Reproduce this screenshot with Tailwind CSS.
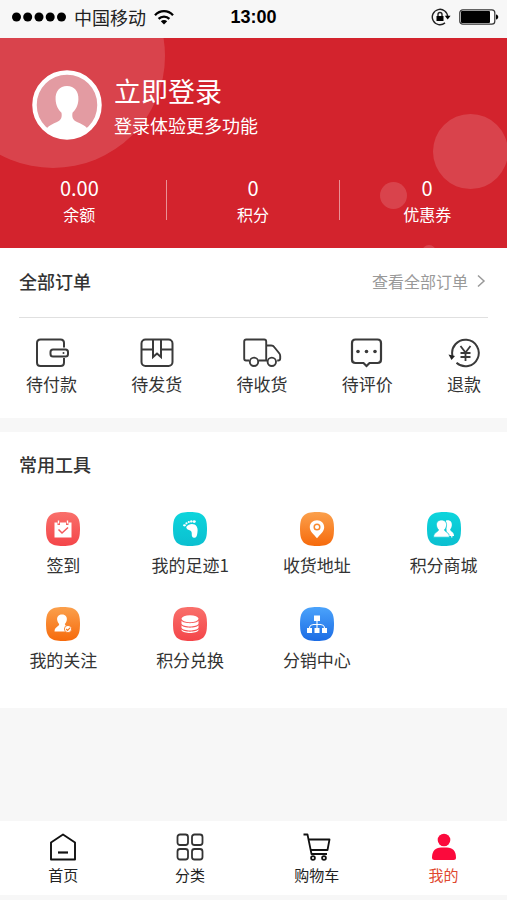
<!DOCTYPE html>
<html lang="zh-CN">
<head>
<meta charset="utf-8">
<meta name="viewport" content="width=device-width, initial-scale=1">
<title>我的</title>
<script src="https://cdn.jsdelivr.net/npm/@tailwindcss/browser@4"></script>
</head>
<body class="flex min-h-screen flex-col bg-[#f7f7f7] font-['Noto_Sans_CJK_SC',sans-serif] text-[#333]">

<!-- Status bar -->
<div class="grid h-[38px] grid-cols-3 items-center px-2 pb-1 text-black">
  <div class="flex items-center gap-2 pl-1">
    <svg class="h-[10px] w-[54px] shrink-0" viewBox="0 0 54 10"><circle cx="4.5" cy="5" r="4.5"/><circle cx="15.7" cy="5" r="4.5"/><circle cx="27" cy="5" r="4.5"/><circle cx="38.2" cy="5" r="4.5"/><circle cx="49.5" cy="5" r="4.5"/></svg>
    <span class="text-[18px] leading-6 whitespace-nowrap text-[#222]">中国移动</span>
    <svg class="h-[15px] w-[20px] shrink-0" viewBox="0 0 20 15" fill="none" stroke="#000" stroke-width="2.3"><path d="M1 5.2C6-.2 14-.2 19 5.2"/><path d="M4.6 8.9c3-3.1 7.8-3.1 10.8 0"/><path d="M10 14.5 6.8 11.3c1.800-1.700 4.600-1.700 6.400 0Z" fill="#000" stroke="none"/></svg>
  </div>
  <span class="text-center font-['Liberation_Sans',sans-serif] text-[18px] leading-6 font-bold">13:00</span>
  <div class="flex items-center justify-end gap-2">
    <svg class="h-[18px] w-[20px]" viewBox="0 0 20 18" fill="none" stroke="#222" stroke-width="1.400"><path d="M16.700 9A7.700 7.700 0 1 0 14 14.900"/><path d="M13.800 7.800h5.800l-2.900 3.600Z" fill="#000" stroke="none"/><rect x="5.500" y="8" width="7" height="5" fill="#000" stroke="none"/><path d="M7 8V6.500a2 2 0 0 1 4 0V8"/></svg>
    <svg class="h-[16px] w-[40px]" viewBox="0 0 40 16"><rect x=".8" y=".8" width="35" height="14.400" rx="3" fill="#fff" stroke="#333" stroke-width="1.200"/><rect x="2" y="2" width="29" height="12" rx="1" fill="#000"/><path d="M37 5.500c3 .6 3 4.400 0 5Z" fill="#000"/></svg>
  </div>
</div>

<!-- Account header -->
<header class="relative overflow-hidden bg-[#d3232d] pt-8 pb-7 text-white">
  <div class="absolute -top-[94px] -left-[59px] size-[224px] rounded-full bg-white/15"></div>
  <div class="absolute top-[76px] -right-[1px] size-[75px] rounded-full bg-white/15"></div>
  <div class="absolute top-[144px] right-[100px] size-[27px] rounded-full bg-white/15"></div>
  <div class="absolute -bottom-[11px] right-[71px] size-[14px] rounded-full bg-white/15"></div>
  <a href="#login" class="relative flex items-center gap-3 pl-8">
    <svg class="size-[70px]" viewBox="0 0 70 70"><circle cx="35" cy="35" r="32.500" fill="#e39ba2" stroke="#fff" stroke-width="4.500"/><path d="M35 16c-7.500 0-11.800 5.500-11.400 13.500.3 6 2.600 10 5.900 13.200.8 4.800-.5 7.300-4.500 9.300-4 1.900-7.500 3-10.500 6.500 5.500 5.500 12.500 8.500 20.500 8.500s15-3 20.500-8.500C52.500 55 49 53.900 45 52c-4-2-5.300-4.500-4.500-9.300 3.300-3.200 5.600-7.200 5.900-13.200C46.800 21.500 42.500 16 35 16Z" fill="#fff"/></svg>
    <span class="flex flex-col">
      <span class="text-[27px] leading-10">立即登录</span>
      <span class="text-[18px] leading-7">登录体验更多功能</span>
    </span>
  </a>
  <div class="relative -mx-[7px] mt-10 grid grid-cols-3 divide-x divide-white/50 text-center">
    <a href="#balance" class="flex h-10 flex-col justify-center"><span class="text-[20px] leading-7">0.00</span><span class="text-[16px] leading-6">余额</span></a>
    <a href="#points" class="flex h-10 flex-col justify-center"><span class="text-[20px] leading-7">0</span><span class="text-[16px] leading-6">积分</span></a>
    <a href="#coupons" class="flex h-10 flex-col justify-center"><span class="text-[20px] leading-7">0</span><span class="text-[16px] leading-6">优惠券</span></a>
  </div>
</header>

<main class="flex flex-1 flex-col gap-[14px]">
  <!-- Orders -->
  <section class="bg-white pb-5">
    <div class="mx-[19px] flex h-[70px] items-center justify-between border-b border-[#e0e0e0] pb-1">
      <h2 class="text-[18px] leading-7 font-medium">全部订单</h2>
      <a href="#orders" class="flex items-center gap-2 text-[16px] leading-6 text-[#999]">查看全部订单
        <svg class="h-[14px] w-[12px]" viewBox="0 0 12 14" fill="none" stroke="#999" stroke-width="1.500"><path d="m2 1.500 6 5.500-6 5.500"/></svg>
      </a>
    </div>
    <nav class="flex justify-between px-[26px] pt-5 text-[17px] leading-7" aria-label="订单">
      <a href="#pay" class="flex flex-col items-center gap-[2px]">
        <svg class="h-[30px] w-[40px]" viewBox="0 0 40 30" fill="none" stroke="#3a3a3a" stroke-width="2"><path d="M32 9.500V5q0-3.500-3.500-3.500H8.500Q5 1.500 5 5v19.500Q5 28 8.500 28h20q3.500 0 3.500-3.500V20"/><rect x="18.500" y="11.500" width="17.500" height="7" rx="2.500"/><circle cx="31.500" cy="15" r="1" fill="#3a3a3a" stroke="none"/></svg>
        待付款</a>
      <a href="#ship" class="flex flex-col items-center gap-[2px]">
        <svg class="h-[30px] w-[40px]" viewBox="0 0 40 30" fill="none" stroke="#3a3a3a" stroke-width="2"><rect x="4.500" y="1.500" width="31" height="26.500" rx="4"/><path d="M4.500 11.500H16M24 11.500h11.500M16 1.500V19l4-3.500 4 3.500V1.500"/></svg>
        待发货</a>
      <a href="#receive" class="flex flex-col items-center gap-[2px]">
        <svg class="h-[30px] w-[40px]" viewBox="0 0 40 30" fill="none" stroke="#3a3a3a" stroke-width="1.900"><path d="M7 22.500H4q-1.800 0-1.800-2V3.500q0-2 2-2h18q2 0 2 2v19H16.500M24.200 7.500h5q2 0 3.200 1.800l5 6.200q.8 1 .8 2.500v2.500q0 2-2 2h-1"/><circle cx="12" cy="23.800" r="4.200"/><circle cx="29.800" cy="23.800" r="4.200"/></svg>
        待收货</a>
      <a href="#review" class="flex flex-col items-center gap-[2px]">
        <svg class="h-[30px] w-[40px]" viewBox="0 0 40 30" fill="none" stroke="#3a3a3a" stroke-width="2.200"><path d="M8.500 1.500h22q3.500 0 3.500 3.500v16.500q0 3.500-3.500 3.500H22.500l-3 3-3-3h-8Q5 25 5 21.500V5q0-3.500 3.500-3.500Z"/><g fill="#3a3a3a" stroke="none"><circle cx="11" cy="13.500" r="1.800"/><circle cx="19.500" cy="13.500" r="1.800"/><circle cx="28" cy="13.500" r="1.800"/></g></svg>
        待评价</a>
      <a href="#refund" class="flex flex-col items-center gap-[2px]">
        <svg class="h-[30px] w-[34px]" viewBox="0 0 34 30" fill="none" stroke="#3a3a3a" stroke-width="2"><path d="M5.500 18A13.300 13.300 0 1 1 9.500 24.800"/><path d="M1.500 16.500 8 18l-3.500 4Z" fill="#222" stroke="none"/><path d="m13.500 8 5 6.500 5-6.500M18.500 14.500V23M13.500 15h10M13.500 19h10" stroke-width="1.800"/></svg>
        退款</a>
    </nav>
  </section>

  <!-- Tools -->
  <section class="bg-white pt-[18px] pb-[34px]">
    <h2 class="px-[19px] text-[18px] leading-7 font-medium">常用工具</h2>
    <nav class="mt-[34px] grid grid-cols-4 gap-y-7 text-[17px] leading-7" aria-label="常用工具">
      <a href="#checkin" class="flex flex-col items-center gap-[5px]">
        <svg class="size-[34px]" viewBox="0 0 34 34"><defs><linearGradient id="red" x2="0" y2="1"><stop stop-color="#f9706b"/><stop offset="1" stop-color="#f44549"/></linearGradient><linearGradient id="teal" x2="0" y2="1"><stop stop-color="#0dd5dc"/><stop offset="1" stop-color="#0bbfd0"/></linearGradient><linearGradient id="orange" x2="0" y2="1"><stop stop-color="#fba04c"/><stop offset="1" stop-color="#f66a0c"/></linearGradient><linearGradient id="blue" x2="0" y2="1"><stop stop-color="#4ba3fb"/><stop offset="1" stop-color="#1c6ce4"/></linearGradient></defs><path d="M17 0C30 0 34 4 34 17S30 34 17 34 0 30 0 17 4 0 17 0Z" fill="url(#red)"/><path d="M8.500 10.500h3v2.500h2.500v-2.500h6v2.500h2.500v-2.500h3v15h-17Z" fill="#fff"/><path d="M12.500 8.500v3M21.500 8.500v3" stroke="#fff" stroke-width="1.400"/><path d="m12.500 17.500 3.500 3.500 6-5.500" fill="none" stroke="#f4585a" stroke-width="1.500"/></svg>
        签到</a>
      <a href="#history" class="flex flex-col items-center gap-[5px]">
        <svg class="size-[34px]" viewBox="0 0 34 34"><path d="M17 0C30 0 34 4 34 17S30 34 17 34 0 30 0 17 4 0 17 0Z" fill="url(#teal)"/><g fill="#fff"><path d="M13.500 14.500c2.500-3 8-3.500 10.200 0 1.500 2.500.8 5 .5 7.500-.3 2.400-1.400 4.200-3.300 3.700-2.600-.7-2-3.200-2.200-5-.2-1.800-1.700-2-3.400-2.900-1.500-.8-2.500-2-1.800-3.300Z"/><ellipse cx="11.500" cy="13.300" rx="1.500" ry="1.100"/><circle cx="13.500" cy="11.300" r="1.100"/><circle cx="15.800" cy="10" r="1.100"/><circle cx="18.300" cy="9.400" r="1.200"/><ellipse cx="21.200" cy="9.600" rx="1.600" ry="1.400"/></g></svg>
        我的足迹1</a>
      <a href="#address" class="flex flex-col items-center gap-[5px]">
        <svg class="size-[34px]" viewBox="0 0 34 34"><path d="M17 0C30 0 34 4 34 17S30 34 17 34 0 30 0 17 4 0 17 0Z" fill="url(#orange)"/><path d="M17 8.300c-4.200 0-7.200 3-7.200 6.900 0 4.300 4.200 7.300 7.200 11 3-3.700 7.200-6.700 7.200-11 0-3.900-3-6.900-7.200-6.900Z" fill="#fff"/><circle cx="17" cy="15" r="2.800" fill="#fff" stroke="#f88a30" stroke-width="1.500"/></svg>
        收货地址</a>
      <a href="#mall" class="flex flex-col items-center gap-[5px]">
        <svg class="size-[34px]" viewBox="0 0 34 34"><path d="M17 0C30 0 34 4 34 17S30 34 17 34 0 30 0 17 4 0 17 0Z" fill="url(#teal)"/><path d="M19 8.500c4-1 6.300 1.500 5.800 5-.2 2-1 3-1.700 4 .2 1.800 3.200 2.300 3.700 5v1h-7Z" fill="#fff"/><path d="M14.500 8c-3.700 0-5.500 2.700-5 5.800.3 1.900 1 2.900 2 3.900-.2 2.500-4.800 2-5 7.500h16c-.2-5.500-4.800-5-5-7.500 1-1 1.700-2 2-3.900.5-3.100-1.300-5.800-5-5.800Z" fill="#fff" stroke="#0cc9d5" stroke-width=".8"/><path d="M22.500 23.500h4.500M24.800 21.500v4" stroke="#fff" stroke-width="1.200"/></svg>
        积分商城</a>
      <a href="#following" class="flex flex-col items-center gap-[5px]">
        <svg class="size-[34px]" viewBox="0 0 34 34"><path d="M17 0C30 0 34 4 34 17S30 34 17 34 0 30 0 17 4 0 17 0Z" fill="url(#orange)"/><path d="M16 7.500c-3.700 0-5.300 2.700-4.800 5.600.3 1.900 1 2.900 2 3.900-.2 2.800-4.500 2.500-4.700 7.500h15l-.5-4c-1.500-1.500-3.900-1.500-4.200-3.500 1-1 1.700-2 2-3.900.5-2.900-1.100-5.600-4.800-5.600Z" fill="#fff"/><circle cx="22" cy="22" r="3.600" fill="#fff" stroke="#f67c22" stroke-width=".9"/><path d="m20.200 22 1.400 1.400 2.400-2.500" fill="none" stroke="#f67c22" stroke-width="1.200"/></svg>
        我的关注</a>
      <a href="#redeem" class="flex flex-col items-center gap-[5px]">
        <svg class="size-[34px]" viewBox="0 0 34 34"><path d="M17 0C30 0 34 4 34 17S30 34 17 34 0 30 0 17 4 0 17 0Z" fill="url(#red)"/><g fill="#fff"><ellipse cx="17" cy="11.700" rx="8.500" ry="3.500"/><path d="M8.500 13.800c2 3.200 15 3.200 17 0v3c-2 3.600-15 3.600-17 0ZM8.500 18.300c2 3.200 15 3.200 17 0v2.500c-2 3.600-15 3.600-17 0ZM8.500 22.300c2 3.200 15 3.200 17 0v1c-2 3.600-15 3.600-17 0Z"/></g></svg>
        积分兑换</a>
      <a href="#distribution" class="flex flex-col items-center gap-[5px]">
        <svg class="size-[34px]" viewBox="0 0 34 34"><path d="M17 0C30 0 34 4 34 17S30 34 17 34 0 30 0 17 4 0 17 0Z" fill="url(#blue)"/><path d="M14 8.500h6v5.500h-6ZM7 21h5v5H7ZM14.500 21h5v5h-5ZM22 21h5v5h-5Z" fill="#fff"/><path d="M17 13v8M9.500 21c0-3 2-3.800 7.500-3.800s7.500.8 7.500 3.800" fill="none" stroke="#fff" stroke-width="1.100"/></svg>
        分销中心</a>
    </nav>
  </section>
</main>

<!-- Tab bar -->
<nav class="mb-[5px] grid grid-cols-4 bg-white pt-3 pb-2 text-[15px] leading-6 text-[#222]" aria-label="主导航">
  <a href="#home" class="flex flex-col items-center gap-[2px]">
    <svg class="size-[28px]" viewBox="0 0 28 28" fill="none" stroke="#111" stroke-width="1.900" stroke-linejoin="round"><path d="M14 1.500 26 9.500v17H2v-17Z"/><path d="M9 19.500h10" stroke-width="2.200"/></svg>
    首页</a>
  <a href="#category" class="flex flex-col items-center gap-[2px]">
    <svg class="size-[28px]" viewBox="0 0 28 28" fill="none" stroke="#333" stroke-width="1.800"><rect x="1.500" y="1.500" width="10.500" height="10.500" rx="2.500"/><rect x="16" y="1.500" width="10.500" height="10.500" rx="2.500"/><rect x="1.500" y="16" width="10.500" height="10.500" rx="2.500"/><rect x="16" y="16" width="10.500" height="10.500" rx="2.500"/></svg>
    分类</a>
  <a href="#cart" class="flex flex-col items-center gap-[2px]">
    <svg class="size-[28px]" viewBox="0 0 28 28" fill="none" stroke="#111" stroke-width="1.800" stroke-linejoin="round"><path d="M.5 1.500H4.500L8.500 21H24"/><path d="M5.600 6.500H26.500L24.500 17H7.800" /><circle cx="10" cy="25" r="1.900"/><circle cx="21" cy="25" r="1.900"/></svg>
    购物车</a>
  <a href="#me" aria-current="page" class="flex flex-col items-center gap-[2px] text-[#e0482f]">
    <svg class="size-[28px]" viewBox="0 0 28 28" fill="#fb0a3c"><circle cx="14" cy="7" r="6.300"/><path d="M2 24.500C2 18 5.500 14.500 11 14.500h6c5.500 0 9 3.500 9 10q0 2.500-2.500 2.500h-19Q2 27 2 24.500Z"/></svg>
    我的</a>
</nav>

</body>
</html>
